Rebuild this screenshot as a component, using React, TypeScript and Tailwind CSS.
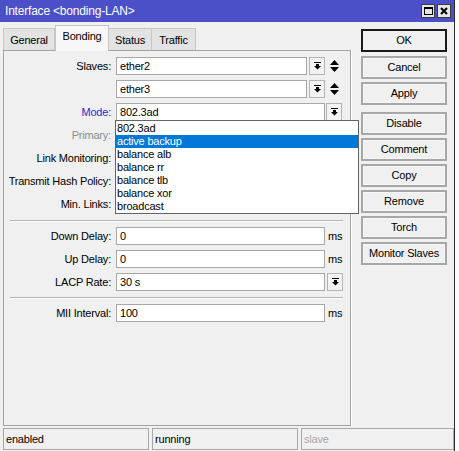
import React from 'react';

const FONT = "font-['Liberation_Sans',Arial,sans-serif]";

function DropBtn() {
  return (
    <div className="w-[16px] h-[18px] border border-[#b4b4b4] bg-[#f3f3f3] flex items-center justify-center">
      <svg width="7" height="8" viewBox="0 0 7 8">
        <rect x="0" y="0" width="7" height="1" fill="#000" />
        <rect x="2" y="2" width="3" height="2" fill="#000" />
        <polygon points="0,4 7,4 3.5,7.5" fill="#000" />
      </svg>
    </div>
  );
}

function UpDown() {
  return (
    <svg width="9" height="12" viewBox="0 0 9 12" className="ml-[5px]">
      <polygon points="4.5,0 9,5 0,5" fill="#000" />
      <polygon points="0,7 9,7 4.5,12" fill="#000" />
    </svg>
  );
}

function Label({ text, color = 'text-black' }: { text: string; color?: string }) {
  return <div className={`w-[108px] text-right pr-[1px] ${color}`}>{text}</div>;
}

function Field({ value, w }: { value: string; w: string }) {
  return (
    <div className={`${w} h-[18px] ml-[4px] bg-white border border-[#a8a8a8] pl-[3px] flex items-center`}>
      {value}
    </div>
  );
}

function Sep() {
  return (
    <div className="ml-[6px] w-[333px] h-[2px] border-t border-[#b4b4b4] border-b-white border-b" />
  );
}

const MODES = ['802.3ad', 'active backup', 'balance alb', 'balance rr', 'balance tlb', 'balance xor', 'broadcast'];

const BUTTONS = [
  ['Cancel', 'Apply'],
  ['Disable', 'Comment', 'Copy', 'Remove', 'Torch', 'Monitor Slaves'],
];

function Btn({ label, primary }: { label: string; primary?: boolean }) {
  return (
    <div
      className={`w-[86px] h-[23px] flex items-center justify-center bg-[#f0f0f0] ${
        primary ? 'border-2 border-[#1a1a1a]' : 'border-[2px] border-[#a7a7a7] shadow-[inset_0_0_0_1px_#f7f7f7]'
      }`}
    >
      {label}
    </div>
  );
}

export default function App() {
  return (
    <div className={`w-[459px] h-[451px] flex bg-white text-[11px] tracking-[-0.2px] text-black ${FONT}`}>
      <div className="w-[455px] flex flex-col border-r border-[#2c2c2c] bg-[#f0f0f0]">
        {/* Titelrad */}
        <div className="h-[22px] bg-[#4b50c8] flex items-center pl-[5px] pr-[3px] text-white text-[12px]">
          <span className="flex-1">Interface &lt;bonding-LAN&gt;</span>
          <div className="w-[14px] h-[14px] bg-[#e6e6e6] border border-[#3a3a3a] flex items-center justify-center">
            <div className="w-[9px] h-[8px] border border-black border-t-2" />
          </div>
          <div className="w-[14px] h-[14px] ml-[2px] bg-[#e6e6e6] border border-[#3a3a3a] flex items-center justify-center">
            <svg width="8" height="8" viewBox="0 0 8 8">
              <path d="M1 1 L7 7 M7 1 L1 7" stroke="#000" strokeWidth="2" />
            </svg>
          </div>
        </div>

        <div className="flex flex-1">
          {/* Vänster: flikar + panel */}
          <div className="ml-[3px] w-[348px] flex flex-col pt-[2px]">
            <div className="flex items-end h-[26px]">
              <div className="w-[52px] h-[22px] bg-[#e3e3e3] border border-[#c6c6c6] border-b-0 flex items-center justify-center pt-[2px]">General</div>
              <div className="w-[54px] h-[26px] bg-[#f7f7f7] border border-[#c6c6c6] border-b-0 flex items-center justify-center pb-[4px] z-10 -mb-[1px]">Bonding</div>
              <div className="w-[43px] h-[22px] bg-[#e3e3e3] border border-[#c6c6c6] border-b-0 border-l-0 flex items-center justify-center pt-[2px]">Status</div>
              <div className="w-[44px] h-[22px] bg-[#e3e3e3] border border-[#c6c6c6] border-b-0 border-l-0 flex items-center justify-center pt-[2px]">Traffic</div>
            </div>
            <div className="h-[376px] border border-[#a3a3a3] shadow-[1px_0_0_#ffffff] pt-[6px] flex flex-col">
              <div className="flex flex-col gap-[5px]">
                <div className="flex items-center">
                  <Label text="Slaves:" />
                  <Field value="ether2" w="w-[191px]" />
                  <div className="ml-[2px]"><DropBtn /></div>
                  <UpDown />
                </div>
                <div className="flex items-center">
                  <Label text="" />
                  <Field value="ether3" w="w-[191px]" />
                  <div className="ml-[2px]"><DropBtn /></div>
                  <UpDown />
                </div>
                <div className="flex items-center relative">
                  <Label text="Mode:" color="text-[#2828d0]" />
                  <Field value="802.3ad" w="w-[209px]" />
                  <div className="ml-[1px]"><DropBtn /></div>
                  <div className="absolute left-[111px] top-[17px] w-[244px] h-[94px] bg-white border border-[#646464] z-20 pt-[1px]">
                    {MODES.map((m, i) => (
                      <div
                        key={m}
                        className={`h-[13px] leading-[13px] pl-[1px] ${i === 1 ? 'bg-[#0078d7] text-white' : ''}`}
                      >
                        {m}
                      </div>
                    ))}
                  </div>
                </div>
                <div className="flex items-center h-[18px]">
                  <Label text="Primary:" color="text-[#8c8c8c]" />
                </div>
                <div className="flex items-center h-[18px]">
                  <Label text="Link Monitoring:" />
                </div>
                <div className="flex items-center h-[18px]">
                  <Label text="Transmit Hash Policy:" />
                </div>
                <div className="flex items-center h-[18px]">
                  <Label text="Min. Links:" />
                </div>
              </div>
              <div className="mt-[7px] mb-[5px]"><Sep /></div>
              <div className="flex flex-col gap-[5px]">
                <div className="flex items-center">
                  <Label text="Down Delay:" />
                  <Field value="0" w="w-[209px]" />
                  <span className="ml-[3px]">ms</span>
                </div>
                <div className="flex items-center">
                  <Label text="Up Delay:" />
                  <Field value="0" w="w-[209px]" />
                  <span className="ml-[3px]">ms</span>
                </div>
                <div className="flex items-center">
                  <Label text="LACP Rate:" />
                  <Field value="30 s" w="w-[209px]" />
                  <div className="ml-[2px]"><DropBtn /></div>
                </div>
              </div>
              <div className="mt-[6px] mb-[5px]"><Sep /></div>
              <div className="flex items-center">
                <Label text="MII Interval:" />
                <Field value="100" w="w-[209px]" />
                <span className="ml-[3px]">ms</span>
              </div>
            </div>
          </div>

          {/* Höger: knappar */}
          <div className="ml-[10px] pt-[7px] flex flex-col">
            <Btn label="OK" primary />
            <div className="mt-[4px] flex flex-col gap-[3px]">
              {BUTTONS[0].map((b) => <Btn key={b} label={b} />)}
            </div>
            <div className="mt-[7px] flex flex-col gap-[3px]">
              {BUTTONS[1].map((b) => <Btn key={b} label={b} />)}
            </div>
          </div>
        </div>

        {/* Statusrad */}
        <div className="h-[25px] flex items-start pt-[2px] pl-[3px]">
          <div className="w-[146px] h-[22px] border border-[#a8a8a8] pl-[2px] flex items-center">enabled</div>
          <div className="w-[146px] h-[22px] ml-[3px] border border-[#a8a8a8] pl-[2px] flex items-center">running</div>
          <div className="w-[153px] h-[22px] ml-[3px] border border-[#a8a8a8] pl-[2px] flex items-center text-[#a8a8a8]">slave</div>
        </div>
      </div>
      <div className="flex-1 bg-white" />
    </div>
  );
}
